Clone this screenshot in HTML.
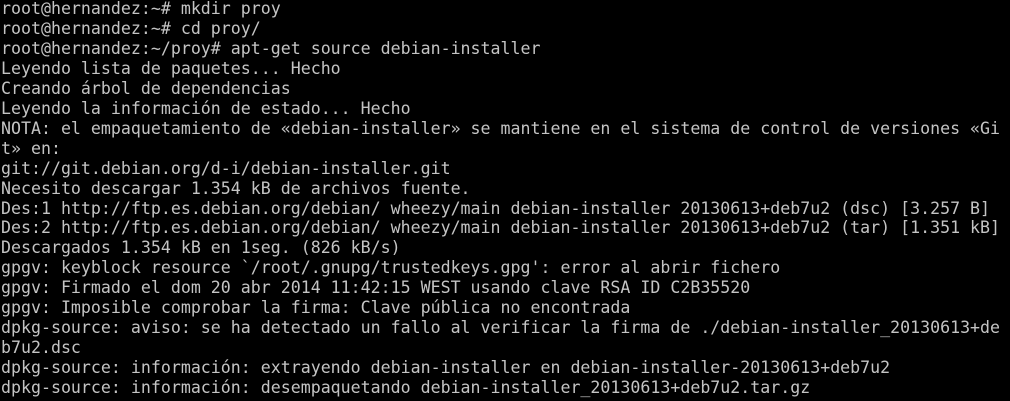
<!DOCTYPE html>
<html><head><meta charset="utf-8"><style>
html,body{margin:0;padding:0;background:#000;width:1010px;height:401px;overflow:hidden}
pre{margin:0;padding:0 0 0 1px;position:relative;top:-1px;font-family:"DejaVu Sans Mono","Liberation Mono",monospace;font-size:16.6px;line-height:19.95px;color:#c4c4c4;white-space:pre}
</style></head><body><pre>root@hernandez:~# mkdir proy
root@hernandez:~# cd proy/
root@hernandez:~/proy# apt-get source debian-installer
Leyendo lista de paquetes... Hecho
Creando árbol de dependencias
Leyendo la información de estado... Hecho
NOTA: el empaquetamiento de «debian-installer» se mantiene en el sistema de control de versiones «Gi
t» en:
git://git.debian.org/d-i/debian-installer.git
Necesito descargar 1.354 kB de archivos fuente.
Des:1 http://ftp.es.debian.org/debian/ wheezy/main debian-installer 20130613+deb7u2 (dsc) [3.257 B]
Des:2 http://ftp.es.debian.org/debian/ wheezy/main debian-installer 20130613+deb7u2 (tar) [1.351 kB]
Descargados 1.354 kB en 1seg. (826 kB/s)
gpgv: keyblock resource `/root/.gnupg/trustedkeys.gpg': error al abrir fichero
gpgv: Firmado el dom 20 abr 2014 11:42:15 WEST usando clave RSA ID C2B35520
gpgv: Imposible comprobar la firma: Clave pública no encontrada
dpkg-source: aviso: se ha detectado un fallo al verificar la firma de ./debian-installer_20130613+de
b7u2.dsc
dpkg-source: información: extrayendo debian-installer en debian-installer-20130613+deb7u2
dpkg-source: información: desempaquetando debian-installer_20130613+deb7u2.tar.gz</pre></body></html>
